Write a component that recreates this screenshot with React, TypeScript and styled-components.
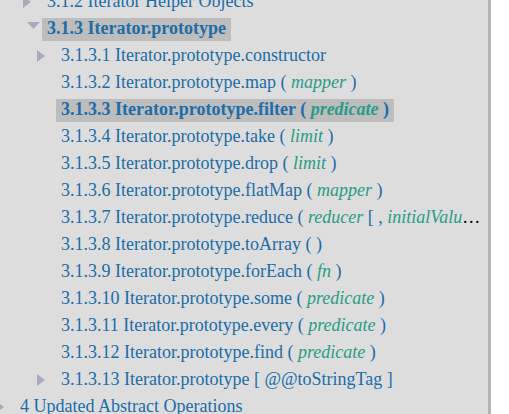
import React from "react";
import styled, { createGlobalStyle } from "styled-components";

const serifStack = `"Liberation Serif", Tinos, "Times New Roman", Times, "DejaVu Serif", serif`;

const GlobalStyle = createGlobalStyle`
  html, body {
    margin: 0;
    padding: 0;
    background: #ffffff;
  }
  body {
    font-family: ${serifStack};
    font-size: 18px;
  }
`;

const Page = styled.div`
  display: flex;
  height: 414px;
  overflow: hidden;
`;

const Menu = styled.nav`
  flex: none;
  width: 488px;
  height: 100%;
  background: #dddddd;
  border-right: 3px solid #b3b3b3;
  overflow: hidden;
  font-family: ${serifStack};
  font-size: 18px;
`;

const TocList = styled.ol`
  list-style: none;
  margin: -12px 0 0 0;
  padding: 0 7px 0 0;
  display: flex;
  flex-direction: column;
`;

const Row = styled.li<{ $indent: number }>`
  display: flex;
  align-items: center;
  height: 27px;
  line-height: 27px;
  margin-left: ${(p) => p.$indent}px;
  white-space: nowrap;
  min-width: 0;
`;

const ToggleCell = styled.span`
  flex: none;
  width: 19px;
  height: 27px;
  display: flex;
  align-items: center;
`;

const Label = styled.span`
  flex: 1 1 auto;
  min-width: 0;
  overflow: hidden;
  text-overflow: ellipsis;
`;

const Link = styled.a<{ $active?: boolean }>`
  color: #206ca7;
  text-decoration: none;
  padding: 0 5px 3px 5px;
  font-weight: ${(p) => (p.$active ? 700 : 400)};
  background: ${(p) => (p.$active ? "#bdbdbd" : "transparent")};
`;

const Var = styled.var`
  color: #2a9c86;
  font-style: italic;
`;

const ClosedIcon = styled.svg`
  display: block;
  margin-top: 1px;
`;

const OpenIcon = styled.svg`
  display: block;
  margin-left: 4px;
  margin-top: -7px;
`;

function Toggle({ kind }: { kind?: "open" | "closed" }) {
  return (
    <ToggleCell>
      {kind === "closed" && (
        <ClosedIcon width="8" height="12" viewBox="0 0 8 12">
          <polygon points="0,0 8,6 0,12" fill="#aab" />
        </ClosedIcon>
      )}
      {kind === "open" && (
        <OpenIcon width="13" height="7" viewBox="0 0 13 7">
          <polygon points="0,0 13,0 6.5,7" fill="#aab" />
        </OpenIcon>
      )}
    </ToggleCell>
  );
}

type Item = {
  level: number;
  num: string;
  title: string;
  params?: React.ReactNode;
  toggle?: "open" | "closed";
  active?: boolean;
};

const indentFor: Record<number, number> = { 1: -4, 3: 23, 4: 37 };

const p = (...parts: React.ReactNode[]) => <>{parts}</>;

const items: Item[] = [
  { level: 3, num: "3.1.2", title: "Iterator Helper Objects", toggle: "closed" },
  { level: 3, num: "3.1.3", title: "Iterator.prototype", toggle: "open", active: true },
  { level: 4, num: "3.1.3.1", title: "Iterator.prototype.constructor", toggle: "closed" },
  { level: 4, num: "3.1.3.2", title: "Iterator.prototype.map", params: p(" ( ", <Var key="v">mapper</Var>, " )") },
  { level: 4, num: "3.1.3.3", title: "Iterator.prototype.filter", params: p(" ( ", <Var key="v">predicate</Var>, " )"), active: true },
  { level: 4, num: "3.1.3.4", title: "Iterator.prototype.take", params: p(" ( ", <Var key="v">limit</Var>, " )") },
  { level: 4, num: "3.1.3.5", title: "Iterator.prototype.drop", params: p(" ( ", <Var key="v">limit</Var>, " )") },
  { level: 4, num: "3.1.3.6", title: "Iterator.prototype.flatMap", params: p(" ( ", <Var key="v">mapper</Var>, " )") },
  {
    level: 4,
    num: "3.1.3.7",
    title: "Iterator.prototype.reduce",
    params: p(" ( ", <Var key="a">reducer</Var>, " [ , ", <Var key="b">initialValue</Var>, " ] )"),
  },
  { level: 4, num: "3.1.3.8", title: "Iterator.prototype.toArray", params: " ( )" },
  { level: 4, num: "3.1.3.9", title: "Iterator.prototype.forEach", params: p(" ( ", <Var key="v">fn</Var>, " )") },
  { level: 4, num: "3.1.3.10", title: "Iterator.prototype.some", params: p(" ( ", <Var key="v">predicate</Var>, " )") },
  { level: 4, num: "3.1.3.11", title: "Iterator.prototype.every", params: p(" ( ", <Var key="v">predicate</Var>, " )") },
  { level: 4, num: "3.1.3.12", title: "Iterator.prototype.find", params: p(" ( ", <Var key="v">predicate</Var>, " )") },
  { level: 4, num: "3.1.3.13", title: "Iterator.prototype [ @@toStringTag ]", toggle: "closed" },
  { level: 1, num: "4", title: "Updated Abstract Operations", toggle: "closed" },
];

export default function App() {
  return (
    <>
      <GlobalStyle />
      <Page>
        <Menu>
          <TocList>
            {items.map((it) => (
              <Row key={it.num} $indent={indentFor[it.level]}>
                <Toggle kind={it.toggle} />
                <Label>
                  <Link href={"#sec-" + it.num} $active={it.active}>
                    {it.num} {it.title}
                    {it.params}
                  </Link>
                </Label>
              </Row>
            ))}
          </TocList>
        </Menu>
      </Page>
    </>
  );
}
